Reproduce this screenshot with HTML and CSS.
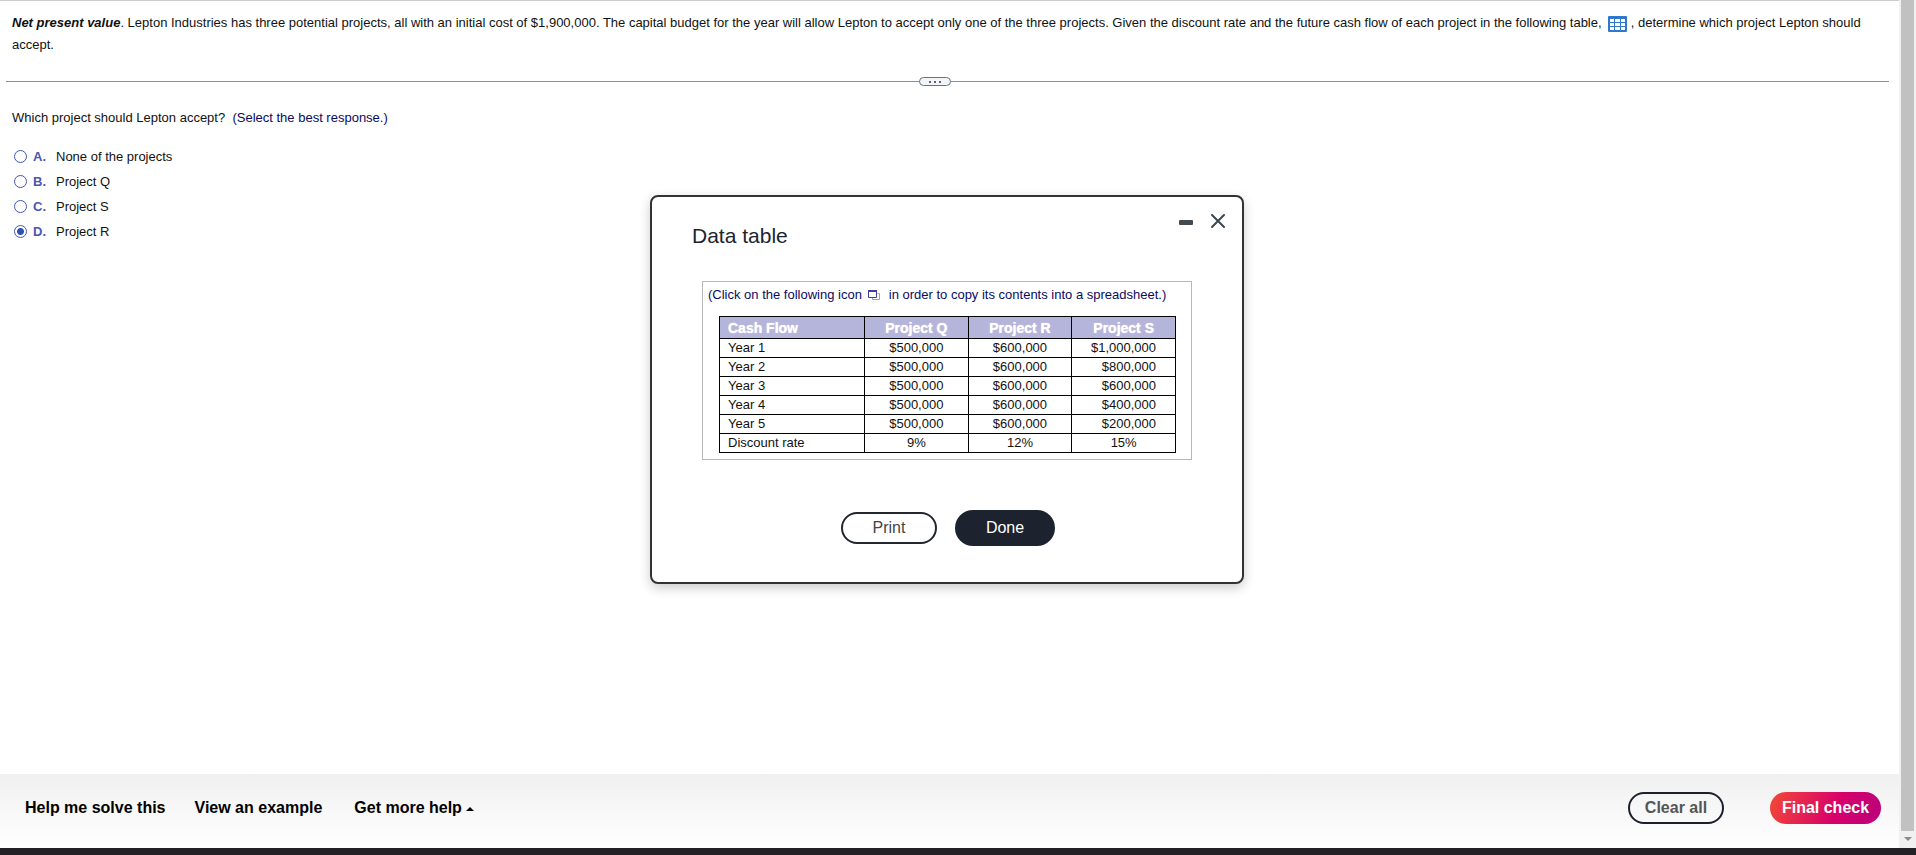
FILE: index.html
```html
<!DOCTYPE html>
<html lang="en">
<head>
<meta charset="UTF-8">
<title>Net present value</title>
<link rel="stylesheet" href="styles.css">
</head>
<body>
<div class="screen">
  <div class="page">
    <main class="exercise">
      <p class="problem"><b><i>Net present value</i></b>. Lepton Industries has three potential projects, all with an initial cost of $1,900,000. The capital budget for the year will allow Lepton to accept only one of the three projects. Given the discount rate and the future cash flow of each project in the following table, <button type="button" class="table-btn" aria-label="Data table"><svg width="19" height="16" viewBox="0 0 19 16"><rect width="19" height="16" rx="1" fill="#2f78cc"/><path fill="#fff" d="M2 3h4v3H2zM7 3h5v3H7zM13 3h4v3h-4zM2 7h4v3H2zM7 7h5v3H7zM13 7h4v3h-4zM2 11h4v3H2zM7 11h5v3H7zM13 11h4v3h-4z"/></svg></button> , determine which project Lepton should accept.</p>

      <div class="divider">
        <button type="button" class="handle" aria-label="Resize"><i></i><i></i><i></i></button>
      </div>

      <form class="question">
        <p>Which project should Lepton accept?&nbsp; <span class="note">(Select the best response.)</span></p>
        <ul class="choices">
          <li><label><input type="radio" name="answer"><b>A.</b>None of the projects</label></li>
          <li><label><input type="radio" name="answer"><b>B.</b>Project Q</label></li>
          <li><label><input type="radio" name="answer"><b>C.</b>Project S</label></li>
          <li><label><input type="radio" name="answer" checked><b>D.</b>Project R</label></li>
        </ul>
      </form>
    </main>

    <footer class="footer">
      <nav class="help">
        <a href="#">Help me solve this</a>
        <a href="#">View an example</a>
        <a href="#" class="more">Get more help <svg width="8" height="6" viewBox="0 0 8 6"><path d="M0 4l4-4 4 4z"/></svg></a>
      </nav>
      <button type="button" class="btn clear">Clear all</button>
      <button type="button" class="btn final">Final check</button>
    </footer>
  </div>

  <div class="scrollbar">
    <div class="thumb"></div>
    <svg width="8" height="4" viewBox="0 0 8 4"><path d="M0 0h8L4 4z" fill="#8a8a8a"/></svg>
  </div>
</div>
<div class="taskbar"></div>

<div class="overlay">
  <section class="dialog" role="dialog" aria-labelledby="dialogTitle">
    <header class="dialog-head">
      <h2 id="dialogTitle">Data table</h2>
      <div class="window-btns">
        <button type="button" aria-label="Minimize"><svg width="14" height="14" viewBox="0 0 14 14"><rect y="6" width="14" height="5" rx="1" fill="#444b50"/></svg></button>
        <button type="button" aria-label="Close"><svg width="14" height="14" viewBox="0 0 14 14"><path d="M1 1l12 12M13 1L1 13" stroke="#3a4750" stroke-width="2" stroke-linecap="round"/></svg></button>
      </div>
    </header>

    <div class="data">
      <p class="note">(Click on the following icon <button type="button" class="copy-btn" aria-label="Copy to spreadsheet"><svg width="12" height="10" viewBox="0 0 12 10"><path d="M4.500 7v2.500h7v-6h-2" fill="none" stroke="#9a9cd0"/><path d="M.5 1v6.500h8V1" fill="#fff" stroke="#3c419c"/><path d="M0 1h9" stroke="#3c419c" stroke-width="2"/></svg></button>&nbsp; in order to copy its contents into a spreadsheet.)</p>
      <table>
        <thead>
          <tr><th>Cash Flow</th><th>Project Q</th><th>Project R</th><th>Project S</th></tr>
        </thead>
        <tbody>
          <tr><td>Year 1</td><td>$500,000</td><td>$600,000</td><td class="num">$1,000,000</td></tr>
          <tr><td>Year 2</td><td>$500,000</td><td>$600,000</td><td class="num">$800,000</td></tr>
          <tr><td>Year 3</td><td>$500,000</td><td>$600,000</td><td class="num">$600,000</td></tr>
          <tr><td>Year 4</td><td>$500,000</td><td>$600,000</td><td class="num">$400,000</td></tr>
          <tr><td>Year 5</td><td>$500,000</td><td>$600,000</td><td class="num">$200,000</td></tr>
          <tr><td>Discount rate</td><td>9%</td><td>12%</td><td>15%</td></tr>
        </tbody>
      </table>
    </div>

    <div class="actions">
      <button type="button" class="btn print">Print</button>
      <button type="button" class="btn done">Done</button>
    </div>
  </section>
</div>
</body>
</html>
```
FILE: styles.css
```css
* { box-sizing: border-box; }
body {
  margin: 0;
  height: 100vh;
  display: flex;
  flex-direction: column;
  font-family: "Liberation Sans", Arial, sans-serif;
  font-size: 13px;
  color: #111;
  background: #fff;
}
p, h2, ul { margin: 0; padding: 0; }
button {
  font-family: inherit;
  border: 0;
  padding: 0;
  background: none;
  cursor: pointer;
}

.screen { flex: 1; display: flex; min-height: 0; }
.page {
  flex: 1;
  display: flex;
  flex-direction: column;
  border-top: 1px solid #ccc;
}
.exercise { flex: 1; }
.problem {
  padding: 11px 28px 0 12px;
  line-height: 22px;
}
.table-btn { margin: 0 0 0 3px; vertical-align: middle; height: 16px; }
.table-btn svg { display: block; }

.divider {
  display: flex;
  align-items: center;
  justify-content: center;
  height: 9px;
  margin: 21px 10px 0 6px;
  padding-right: 26px;
  background: linear-gradient(#84909c, #84909c) center / 100% 1px no-repeat;
}
.handle {
  display: flex;
  align-items: center;
  justify-content: center;
  gap: 3px;
  width: 32px;
  height: 9px;
  border: 1px solid #66727e;
  border-radius: 5px;
  background: #f2f5f8;
}
.handle i { width: 2px; height: 2px; background: #56626e; }

.question { padding: 22px 12px 0; line-height: 20px; }
.note { color: #0a0a64; }
.choices { list-style: none; padding-top: 16px; }
.choices li { height: 25px; }
.choices label { display: flex; align-items: center; height: 25px; }
.choices input {
  appearance: none;
  width: 13px;
  height: 13px;
  margin: 0 6px 0 2px;
  border: 1px solid #4058b0;
  border-radius: 50%;
}
.choices input:checked { background: radial-gradient(circle, #3050b4 3px, #fff 4px); }
.choices b { width: 23px; color: #4a55b4; }

.footer {
  display: flex;
  align-items: center;
  height: 74px;
  padding: 0 18px 6px 25px;
  background: linear-gradient(#f0f0f0, #fff);
}
.help { flex: 1; display: flex; gap: 29px; }
.help a { color: #000; font-size: 16px; font-weight: bold; text-decoration: none; }
.help .more { margin-left: 3px; }
.btn {
  height: 32px;
  border-radius: 18px;
  font-size: 16px;
}
.clear {
  width: 96px;
  border: 2px solid #1c202c;
  color: #555;
  font-weight: bold;
}
.final {
  width: 111px;
  margin-left: 46px;
  color: #fff;
  font-weight: bold;
  background: linear-gradient(110deg, #f24a35, #d7006b 60%, #b9007c);
}

.scrollbar {
  width: 17px;
  display: flex;
  flex-direction: column;
  align-items: center;
  background: #f1f1f1;
}
.thumb { flex: 1; width: 13px; margin-bottom: 6px; background: #c1c1c1; }
.scrollbar svg { margin-bottom: 7px; }
.taskbar { height: 7px; background: #242126; }

.overlay {
  position: absolute;
  inset: 0;
  display: flex;
  align-items: flex-start;
  justify-content: center;
  padding: 195px 22px 0 0;
  pointer-events: none;
}
.dialog {
  width: 594px;
  padding: 17px 17px 36px 40px;
  border: 2px solid #333;
  border-radius: 8px;
  background: #fff;
  box-shadow: 0 4px 12px rgba(0, 0, 0, .2);
  pointer-events: auto;
}
.dialog-head { display: flex; justify-content: space-between; }
.dialog-head h2 {
  padding-top: 10px;
  color: #1c2430;
  font-size: 21px;
  font-weight: normal;
  line-height: 24px;
}
.window-btns { display: flex; align-items: flex-start; gap: 18px; }
.window-btns svg { display: block; }

.data {
  width: 490px;
  margin: 33px 0 0 10px;
  padding: 3px 0 6px 5px;
  border: 1px solid #b8b8b8;
}
.data p { line-height: 20px; }
.copy-btn { margin: 0 2px 0 2px; vertical-align: -1px; }
.copy-btn svg { display: block; }
.data table {
  width: 457px;
  margin: 11px 0 0 11px;
  border-collapse: collapse;
  table-layout: fixed;
}
.data th, .data td {
  height: 19px;
  padding: 0;
  border: 1px solid #000;
  line-height: 18px;
  text-align: center;
}
.data th {
  height: 22px;
  color: #fff;
  font-size: 14px;
  background: #b5b4da;
  text-shadow: 0 0 1px #fff;
}
.data th:first-child { width: 145px; }
.data th:first-child, .data td:first-child { padding-left: 8px; text-align: left; }
.data td.num { padding-right: 19px; text-align: right; }

.actions {
  display: flex;
  align-items: center;
  justify-content: center;
  gap: 18px;
  padding: 50px 21px 0 0;
}
.print { width: 96px; border: 2px solid #23272f; color: #444; }
.done { width: 100px; height: 36px; color: #fff; background: #1c222e; }
```
